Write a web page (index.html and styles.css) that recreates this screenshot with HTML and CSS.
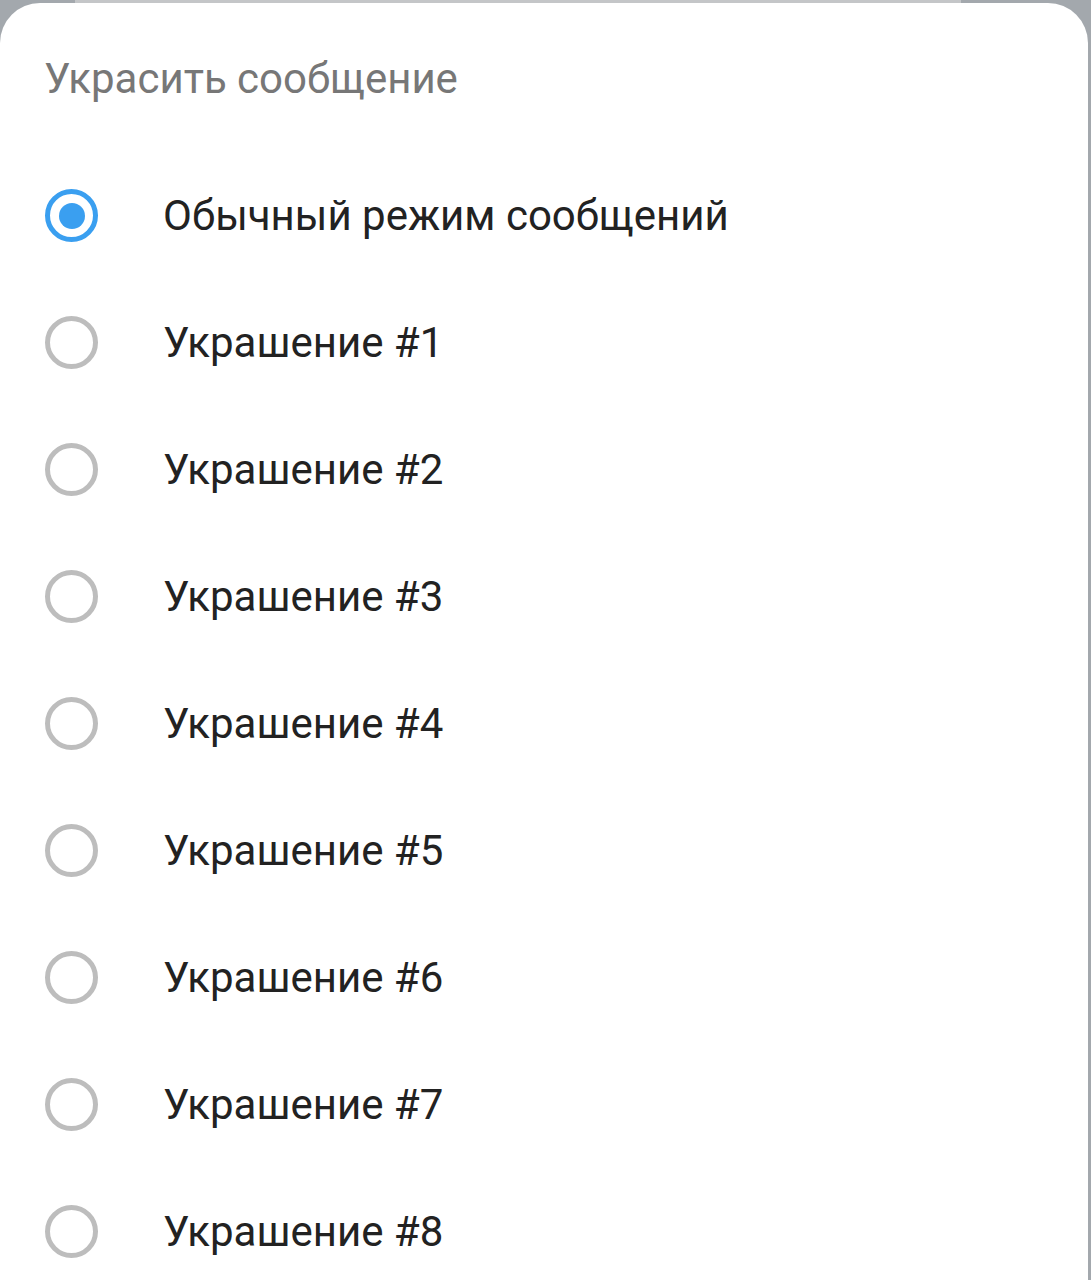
FILE: index.html
```html
<!DOCTYPE html>
<html lang="ru">
<head>
  <meta charset="UTF-8" />
  <meta name="viewport" content="width=device-width, initial-scale=1.0"/>
  <title>Украсить сообщение</title>
  <link rel="stylesheet" href="styles.css">
</head>
<body>
  <div class="backdrop">
    <div class="strip"></div>
  </div>

  <div class="sheet">
    <h2 class="sheet-title">Украсить сообщение</h2>

    <div class="options">
      <label class="option">
        <span class="radio checked"></span>
        <span class="option-text">Обычный режим сообщений</span>
      </label>
      <label class="option">
        <span class="radio"></span>
        <span class="option-text">Украшение #1</span>
      </label>
      <label class="option">
        <span class="radio"></span>
        <span class="option-text">Украшение #2</span>
      </label>
      <label class="option">
        <span class="radio"></span>
        <span class="option-text">Украшение #3</span>
      </label>
      <label class="option">
        <span class="radio"></span>
        <span class="option-text">Украшение #4</span>
      </label>
      <label class="option">
        <span class="radio"></span>
        <span class="option-text">Украшение #5</span>
      </label>
      <label class="option">
        <span class="radio"></span>
        <span class="option-text">Украшение #6</span>
      </label>
      <label class="option">
        <span class="radio"></span>
        <span class="option-text">Украшение #7</span>
      </label>
      <label class="option">
        <span class="radio"></span>
        <span class="option-text">Украшение #8</span>
      </label>
    </div>
  </div>
</body>
</html>
```

FILE: styles.css
```css
body {
  font-family: Roboto, 'Noto Sans', sans-serif;
  background-color: #a3a8ad;
  margin: 0;
  padding: 0;
  overflow: hidden;
}
.backdrop {
  height: 3px;
  padding: 0 130px 0 75px;
}
.strip {
  height: 3px;
  background-color: #c4c6c8;
}
.sheet {
  background-color: #ffffff;
  border-radius: 40px 40px 0 0;
  margin-right: 3px;
  min-height: 1277px;
}
.sheet-title {
  margin: 0;
  padding: 51px 0 0 44px;
  height: 98px;
  font-size: 42px;
  font-weight: 400;
  color: #777777;
}
.options {
  display: flex;
  flex-direction: column;
}
.option {
  display: flex;
  align-items: center;
  height: 127px;
}
.radio {
  box-sizing: border-box;
  width: 53px;
  height: 53px;
  margin-left: 45px;
  border: 5px solid #bdbdbd;
  border-radius: 50%;
  display: flex;
  align-items: center;
  justify-content: center;
}
.radio.checked {
  border-color: #3a9ff0;
}
.radio.checked::after {
  content: "";
  width: 26px;
  height: 26px;
  border-radius: 50%;
  background-color: #3a9ff0;
}
.option-text {
  margin-left: 65px;
  font-size: 42px;
  color: #222222;
}
```
